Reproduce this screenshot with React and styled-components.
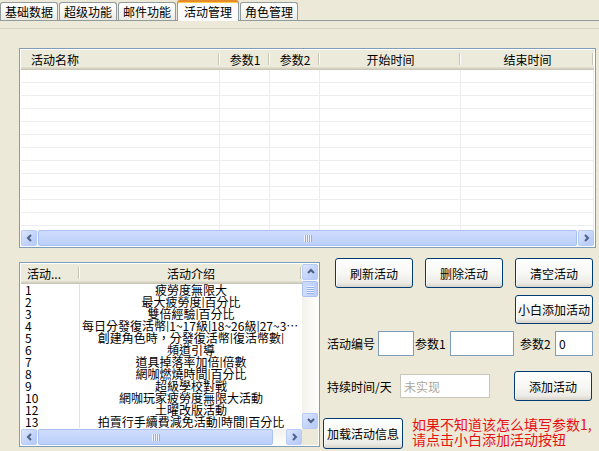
import React from "react";
import styled, { createGlobalStyle } from "styled-components";

const FONT = `"Noto Sans CJK SC", "Noto Sans CJK TC", "DejaVu Sans", sans-serif`;

const GlobalStyle = createGlobalStyle`
  html, body { margin: 0; padding: 0; }
  body {
    background: #ece9d8;
    font-family: ${FONT};
    font-size: 12px;
    color: #000;
  }
  * { box-sizing: border-box; }
`;

const Window = styled.div`
  width: 599px;
  height: 451px;
  overflow: hidden;
  background: #ece9d8;
  display: flex;
  flex-direction: column;
`;

const TabStrip = styled.div`
  display: flex;
  align-items: flex-end;
  gap: 1px;
  height: 21px;
  border-bottom: 1px solid #919b9c;
`;

const Tab = styled.div`
  position: relative;
  z-index: ${(p) => (p.$active ? 1 : 0)};
  height: ${(p) => (p.$active ? 21 : 18)}px;
  margin-bottom: ${(p) => (p.$active ? -1 : 0)}px;
  padding: 0 ${(p) => (p.$active ? 6 : 4)}px;
  border: 1px solid #919b9c;
  border-bottom: none;
  border-top: ${(p) => (p.$active ? "2px solid #e68b2c" : "1px solid #919b9c")};
  border-radius: 3px 3px 0 0;
  background: ${(p) =>
    p.$active
      ? "#fcfcfe"
      : "linear-gradient(to bottom, #ffffff 0%, #f7f7f3 50%, #ebeae3 100%)"};
  box-shadow: ${(p) => (p.$active ? "inset 0 1px 0 #ffc73c" : "none")};
  display: flex;
  align-items: center;
  white-space: nowrap;
  font-size: 12px;
  line-height: 1;
`;

const PageTop = styled.div`
  height: 8px;
  border-bottom: 1px solid #d8d5c5;
`;

const TopList = styled.div`
  margin: 19px 0 0 19px;
  width: 577px;
  height: 200px;
  border: 1px solid #7f9db9;
  padding: 1px;
  background: #fff;
  display: grid;
  grid-template-rows: 20px 1fr 16px;
  overflow: hidden;
`;

const HeaderRow = styled.div`
  display: grid;
  grid-template-columns: ${(p) => p.$cols};
  height: ${(p) => p.$h}px;
  background: #ebeadb;
  box-shadow: inset 0 -1px 0 #cbc7b8, inset 0 -2px 0 #d6d2c2, inset 0 -3px 0 #e2decd;
`;

const HeaderCell = styled.div`
  position: relative;
  display: flex;
  align-items: center;
  justify-content: ${(p) => (p.$left ? "flex-start" : "center")};
  padding-left: ${(p) => (p.$left ? p.$pad : 0)}px;
  padding-bottom: 2px;
  white-space: nowrap;
  overflow: hidden;
  &::after {
    content: "";
    position: absolute;
    right: 1px;
    top: 3px;
    bottom: 5px;
    width: 1px;
    background: #c7c5b2;
    box-shadow: 1px 0 0 #fff;
  }
`;

const GridBody = styled.div`
  overflow: hidden;
`;

const GridRow = styled.div`
  display: grid;
  grid-template-columns: 199px 50px 50px 141px 133px;
  height: 13px;
  border-bottom: 1px solid #ededed;
`;

const GridCell = styled.div`
  border-right: 1px solid #ededed;
`;

const HScroll = styled.div`
  display: flex;
  height: 16px;
  background: linear-gradient(to bottom, #f3f1ec, #fefefb);
`;

const VScroll = styled.div`
  display: flex;
  flex-direction: column;
  width: 16px;
  background: linear-gradient(to right, #f3f1ec, #fefefb);
`;

const ArrowBtn = styled.div`
  flex: none;
  width: 16px;
  height: 16px;
  border: 1px solid #b7cbf5;
  border-radius: 2px;
  background: linear-gradient(135deg, #dde7fd 0%, #c3d4fb 55%, #b4c9f7 100%);
  display: flex;
  align-items: center;
  justify-content: center;
`;

const Thumb = styled.div`
  flex: ${(p) => (p.$grow ? 1 : "none")};
  ${(p) => (p.$vertical ? "height: 16px; width: 16px;" : "height: 16px;")}
  ${(p) => (p.$size ? `width: ${p.$size}px;` : "")}
  margin: ${(p) => (p.$vertical ? "1px 0" : "0 1px")};
  border: 1px solid #a9c0f3;
  border-radius: 2px;
  background: ${(p) =>
    p.$vertical
      ? "linear-gradient(to right, #cfdcfd, #bccffa)"
      : "linear-gradient(to bottom, #cfdcfd, #bccffa)"};
  display: flex;
  align-items: center;
  justify-content: center;
`;

const Track = styled.div`
  flex: 1;
`;

const Grip = styled.div`
  display: flex;
  flex-direction: ${(p) => (p.$vertical ? "column" : "row")};
  gap: 1px;
  & > span {
    display: block;
    background: #eef3fe;
    box-shadow: ${(p) => (p.$vertical ? "0 1px 0 #8faef0" : "1px 0 0 #8faef0")};
    ${(p) => (p.$vertical ? "width: 7px; height: 1px;" : "width: 1px; height: 7px;")}
  }
`;

const Chevron = ({ dir }) => {
  const pts = {
    left: "6,2 3,5 6,8",
    right: "3,2 6,5 3,8",
    up: "2,6 5,3 8,6",
    down: "2,3 5,6 8,3",
  }[dir];
  return (
    <svg width="9" height="10" viewBox="0 0 9 10">
      <polyline points={pts} fill="none" stroke="#4d6185" strokeWidth="2" />
    </svg>
  );
};

const GripLines = ({ vertical }) => (
  <Grip $vertical={vertical}>
    <span />
    <span />
    <span />
    <span />
  </Grip>
);

const LowerSection = styled.div`
  display: flex;
  align-items: flex-start;
  margin-top: 10px;
`;

const LowerList = styled.div`
  margin: 4px 0 0 19px;
  width: 301px;
  height: 185px;
  border: 1px solid #7f9db9;
  padding: 1px;
  background: #fff;
  display: grid;
  grid-template-columns: 1fr 16px;
  grid-template-rows: 1fr 16px;
  overflow: hidden;
`;

const ListContent = styled.div`
  overflow: hidden;
  display: flex;
  flex-direction: column;
`;

const ItemRow = styled.div`
  flex: none;
  display: grid;
  grid-template-columns: 59px 1fr;
  height: 12px;
  line-height: 12px;
  font-size: 12px;
  font-family: "Noto Sans CJK TC", ${FONT};
`;

const IdCell = styled.div`
  padding-left: 4px;
  border-right: 1px solid #e2e2e2;
  white-space: nowrap;
`;

const DescCell = styled.div`
  text-align: center;
  white-space: nowrap;
  overflow: hidden;
  text-overflow: ellipsis;
  padding: 0 2px;
`;

const Corner = styled.div`
  background: #ece9d8;
`;

const RightPanel = styled.div`
  margin-left: 3px;
  width: 276px;
  display: flex;
  flex-direction: column;
`;

const Row = styled.div`
  display: flex;
  align-items: center;
  justify-content: ${(p) => p.$justify || "flex-start"};
  gap: ${(p) => p.$gap || 0}px;
  margin-top: ${(p) => p.$mt || 0}px;
  padding-left: ${(p) => p.$pl || 0}px;
  padding-right: ${(p) => p.$pr || 0}px;
  height: ${(p) => p.$h}px;
`;

const Button = styled.button`
  flex: none;
  width: ${(p) => p.$w || 78}px;
  height: ${(p) => p.$h || 30}px;
  margin-left: ${(p) => p.$ml || 0}px;
  padding: 0;
  font-family: ${FONT};
  font-size: 12px;
  color: #000;
  white-space: nowrap;
  border: 1px solid #003c74;
  border-radius: 3px;
  background: linear-gradient(to bottom, #ffffff 0%, #f6f6f2 55%, #ecebe6 85%, #d8d3c8 100%);
  box-shadow: inset 1px 1px 0 #fff;
`;

const Label = styled.span`
  flex: none;
  width: ${(p) => p.$w}px;
  margin-left: ${(p) => p.$ml || 0}px;
  white-space: nowrap;
  font-size: 12px;
`;

const TextBox = styled.div`
  flex: none;
  width: ${(p) => p.$w}px;
  height: ${(p) => p.$h || 25}px;
  border: 1px solid ${(p) => (p.$disabled ? "#c9c7ba" : "#7f9db9")};
  background: #fff;
  color: ${(p) => (p.$disabled ? "#aca899" : "#000")};
  padding-left: 3px;
  display: flex;
  align-items: center;
  font-size: 12px;
`;

const Hint = styled.div`
  margin-left: 9px;
  color: #e81010;
  font-size: 14px;
  line-height: 15px;
  white-space: nowrap;
  margin-top: -3px;
`;

const tabs = ["基础数据", "超级功能", "邮件功能", "活动管理", "角色管理"];

const items = [
  ["1", "疲勞度無限大"],
  ["2", "最大疲勞度|百分比"],
  ["3", "雙倍經驗|百分比"],
  ["4", "每日分發復活幣|1~17級|18~26級|27~35級|36級以上"],
  ["5", "創建角色時，分發復活幣|復活幣數|"],
  ["6", "頻道引導"],
  ["7", "道具掉落率加倍|倍數"],
  ["8", "網咖燃燒時間|百分比"],
  ["9", "超級學校對戰"],
  ["10", "網咖玩家疲勞度無限大活動"],
  ["12", "土曜改版活動"],
  ["13", "拍賣行手續費減免活動|時間|百分比"],
];

export default function App() {
  return (
    <Window>
      <GlobalStyle />
      <TabStrip>
        {tabs.map((t) => (
          <Tab key={t} $active={t === "活动管理"}>
            {t}
          </Tab>
        ))}
      </TabStrip>
      <PageTop />

      <TopList>
        <HeaderRow $cols="199px 50px 50px 141px 133px" $h={20}>
          <HeaderCell $left $pad={10}>活动名称</HeaderCell>
          <HeaderCell>参数1</HeaderCell>
          <HeaderCell>参数2</HeaderCell>
          <HeaderCell>开始时间</HeaderCell>
          <HeaderCell>结束时间</HeaderCell>
        </HeaderRow>
        <GridBody>
          {Array.from({ length: 13 }).map((_, i) => (
            <GridRow key={i}>
              <GridCell />
              <GridCell />
              <GridCell />
              <GridCell />
              <GridCell />
            </GridRow>
          ))}
        </GridBody>
        <HScroll>
          <ArrowBtn>
            <Chevron dir="left" />
          </ArrowBtn>
          <Thumb $grow>
            <GripLines />
          </Thumb>
          <ArrowBtn>
            <Chevron dir="right" />
          </ArrowBtn>
        </HScroll>
      </TopList>

      <LowerSection>
        <LowerList>
          <ListContent>
            <HeaderRow $cols="59px 1fr" $h={20}>
              <HeaderCell $left $pad={6}>活动...</HeaderCell>
              <HeaderCell>活动介绍</HeaderCell>
            </HeaderRow>
            {items.map(([id, desc]) => (
              <ItemRow key={id}>
                <IdCell>{id}</IdCell>
                <DescCell>{desc}</DescCell>
              </ItemRow>
            ))}
          </ListContent>
          <VScroll>
            <ArrowBtn>
              <Chevron dir="up" />
            </ArrowBtn>
            <Thumb $vertical>
              <GripLines vertical />
            </Thumb>
            <Track />
            <ArrowBtn>
              <Chevron dir="down" />
            </ArrowBtn>
          </VScroll>
          <HScroll>
            <ArrowBtn>
              <Chevron dir="left" />
            </ArrowBtn>
            <Thumb $size={235}>
              <GripLines />
            </Thumb>
            <Track />
            <ArrowBtn>
              <Chevron dir="right" />
            </ArrowBtn>
          </HScroll>
          <Corner />
        </LowerList>

        <RightPanel>
          <Row $h={30} $gap={12} $pl={12}>
            <Button>刷新活动</Button>
            <Button>删除活动</Button>
            <Button>清空活动</Button>
          </Row>
          <Row $h={29} $mt={7} $justify="flex-end" $pr={6}>
            <Button $h={29}>小白添加活动</Button>
          </Row>
          <Row $h={25} $mt={7}>
            <Label $ml={4} $w={51}>活动编号</Label>
            <TextBox $w={36} />
            <Label $ml={1} $w={35}>参数1</Label>
            <TextBox $w={64} />
            <Label $ml={6} $w={35}>参数2</Label>
            <TextBox $w={38}>0</TextBox>
          </Row>
          <Row $h={30} $mt={15}>
            <Label $ml={4} $w={73}>持续时间/天</Label>
            <TextBox $w={90} $h={24} $disabled>
              未实现
            </TextBox>
            <Button $ml={24}>添加活动</Button>
          </Row>
          <Row $h={31} $mt={17}>
            <Button $w={80} $h={31}>加载活动信息</Button>
            <Hint>
              如果不知道该怎么填写参数1,
              <br />
              请点击小白添加活动按钮
            </Hint>
          </Row>
        </RightPanel>
      </LowerSection>
    </Window>
  );
}
